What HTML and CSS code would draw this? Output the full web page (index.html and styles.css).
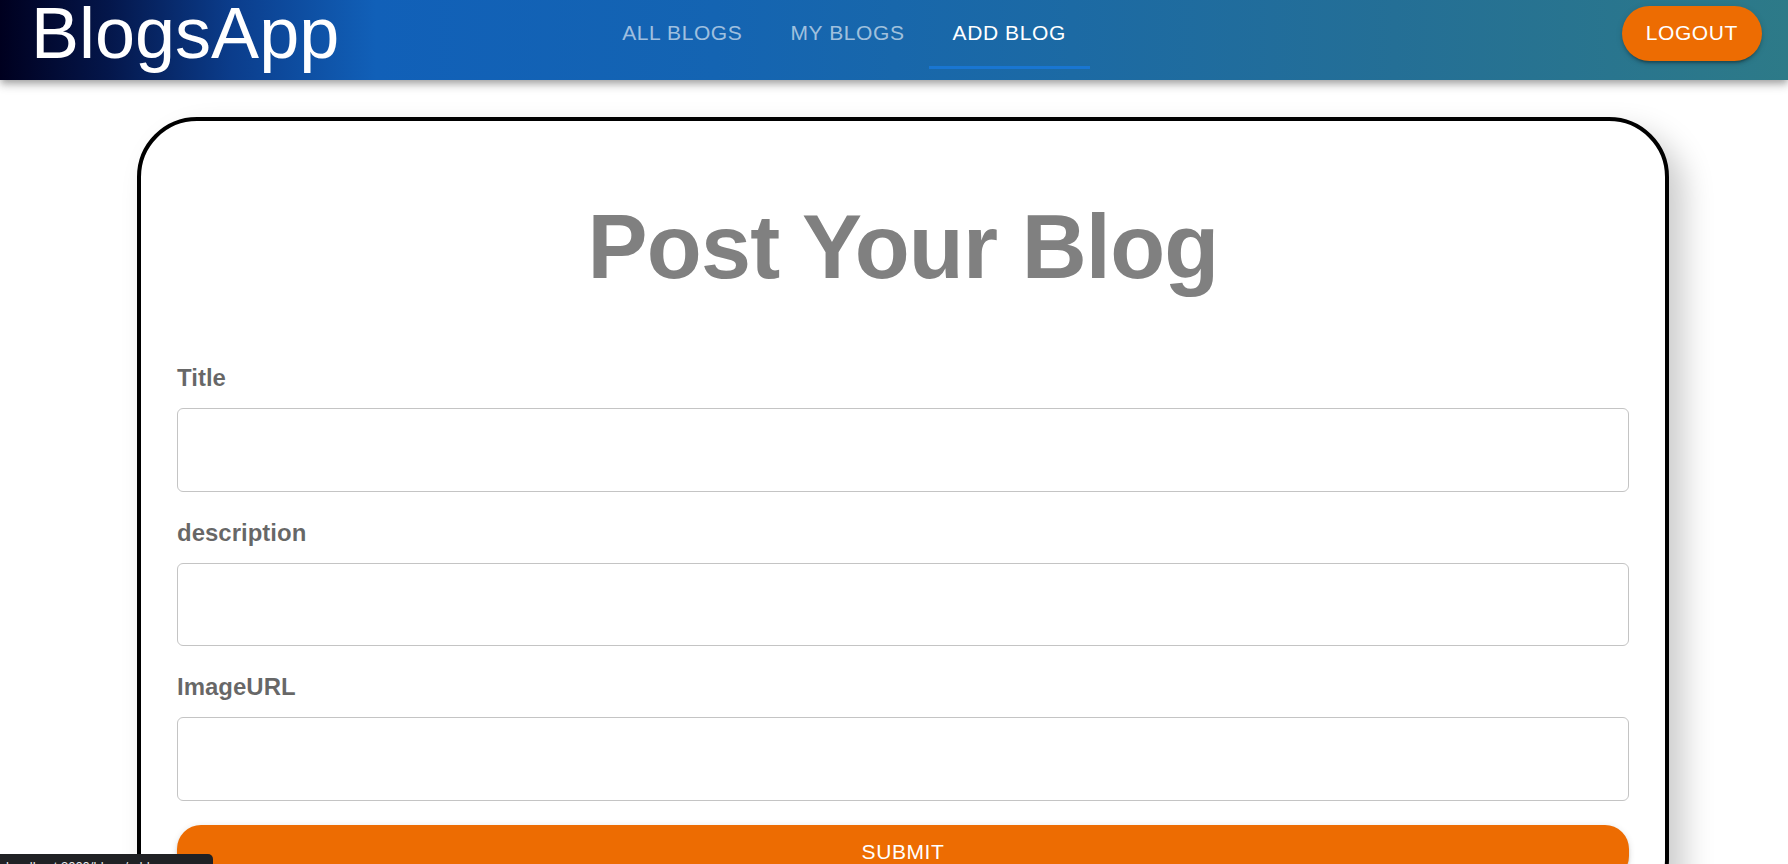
FILE: index.html
```html
<!DOCTYPE html>
<html lang="en">
<head>
<meta charset="utf-8">
<title>BlogsApp</title>
<link rel="stylesheet" href="styles.css">
</head>
<body>
<header class="appbar">
  <div class="brand">BlogsApp</div>
  <nav class="tabs">
    <a class="tab" href="#">ALL BLOGS</a>
    <a class="tab" href="#">MY BLOGS</a>
    <a class="tab active" href="#">ADD BLOG</a>
  </nav>
  <button class="logout" type="button">LOGOUT</button>
</header>
<main class="page">
  <form class="card">
    <h2 class="card-title">Post Your Blog</h2>
    <label class="field-label" for="title">Title</label>
    <input class="field-input" id="title" type="text">
    <label class="field-label" for="description">description</label>
    <input class="field-input" id="description" type="text">
    <label class="field-label" for="image">ImageURL</label>
    <input class="field-input" id="image" type="text">
    <button class="submit" type="submit">SUBMIT</button>
  </form>
</main>
<div class="status-bubble">localhost:3000/blogs/add</div>
</body>
</html>
```

FILE: styles.css
```css
html {
  scrollbar-width: none;
}
html::-webkit-scrollbar {
  display: none;
}
body {
  margin: 0;
  background: #ffffff;
  font-family: "Liberation Sans", Arial, sans-serif;
}

.appbar {
  position: relative;
  z-index: 2;
  display: flex;
  align-items: flex-start;
  height: 80px;
  box-sizing: border-box;
  padding: 0 26px 0 31px;
  background: linear-gradient(90deg, #00001f 0%, #04164a 6%, #0b3d8c 13%, #1160b8 21%, #1464b2 40%, #1c6aa4 60%, #246f96 78%, #2d7a88 100%);
  box-shadow: 0 3px 6px -1.5px rgba(0,0,0,0.2), 0 6px 7.5px 0 rgba(0,0,0,0.14), 0 1.5px 15px 0 rgba(0,0,0,0.12);
}

.brand {
  color: #ffffff;
  font-size: 72px;
  line-height: 67px;
  white-space: nowrap;
}

.tabs {
  display: flex;
  height: 72px;
  margin-top: -3px;
  margin-left: 259px;
}

.tab {
  display: flex;
  align-items: center;
  padding: 0 24px;
  font-size: 21px;
  line-height: 1.25;
  letter-spacing: 0.6px;
  color: rgba(255,255,255,0.6);
  text-decoration: none;
  white-space: nowrap;
}

.tab.active {
  color: #ffffff;
  box-shadow: inset 0 -3px 0 #1976d2;
}

.logout {
  margin-left: auto;
  margin-top: 6px;
  padding: 9px 24px;
  border: none;
  border-radius: 30px;
  background: #ed6c02;
  color: #ffffff;
  font-family: inherit;
  font-size: 21px;
  line-height: 36.75px;
  letter-spacing: 0.6px;
  box-shadow: 0 4.5px 1.5px -3px rgba(0,0,0,0.2), 0 3px 3px 0 rgba(0,0,0,0.14), 0 1.5px 7.5px 0 rgba(0,0,0,0.12);
}

.page {
  padding-top: 36.5px;
}

.card {
  display: flex;
  flex-direction: column;
  box-sizing: border-box;
  width: 1532px;
  margin-left: 137px;
  padding: 36px;
  border: 4px solid #000000;
  border-radius: 60px;
  box-shadow: 15px 15px 30px #cccccc;
  background: #ffffff;
}

.card-title {
  margin: 0;
  padding: 36px 36px 36.5px;
  color: #808080;
  font-size: 90px;
  line-height: 108px;
  font-weight: 700;
  letter-spacing: -0.75px;
  text-align: center;
}

.field-label {
  margin: 24px 0 12.5px;
  color: rgba(0,0,0,0.6);
  font-size: 24px;
  line-height: 34.5px;
  font-weight: 700;
}

.field-input {
  box-sizing: border-box;
  height: 83.5px;
  width: 100%;
  margin: 0;
  padding: 0 21px;
  border: 1px solid #c4c4c4;
  border-radius: 6px;
  font-family: inherit;
  font-size: 24px;
  background: #ffffff;
}

.submit {
  margin-top: 24px;
  height: 55px;
  border: none;
  border-radius: 24px;
  background: #ed6c02;
  color: #ffffff;
  font-family: inherit;
  font-size: 21px;
  letter-spacing: 0.6px;
  box-shadow: 0 4.5px 1.5px -3px rgba(0,0,0,0.2), 0 3px 3px 0 rgba(0,0,0,0.14), 0 1.5px 7.5px 0 rgba(0,0,0,0.12);
}

.status-bubble {
  position: fixed;
  left: 0;
  top: 854px;
  z-index: 5;
  box-sizing: border-box;
  width: 213px;
  height: 24px;
  padding: 5px 6px;
  background: #202124;
  border-top-right-radius: 5px;
  color: #e8eaed;
  font-size: 13px;
  line-height: 16px;
  white-space: nowrap;
  overflow: hidden;
}
```
